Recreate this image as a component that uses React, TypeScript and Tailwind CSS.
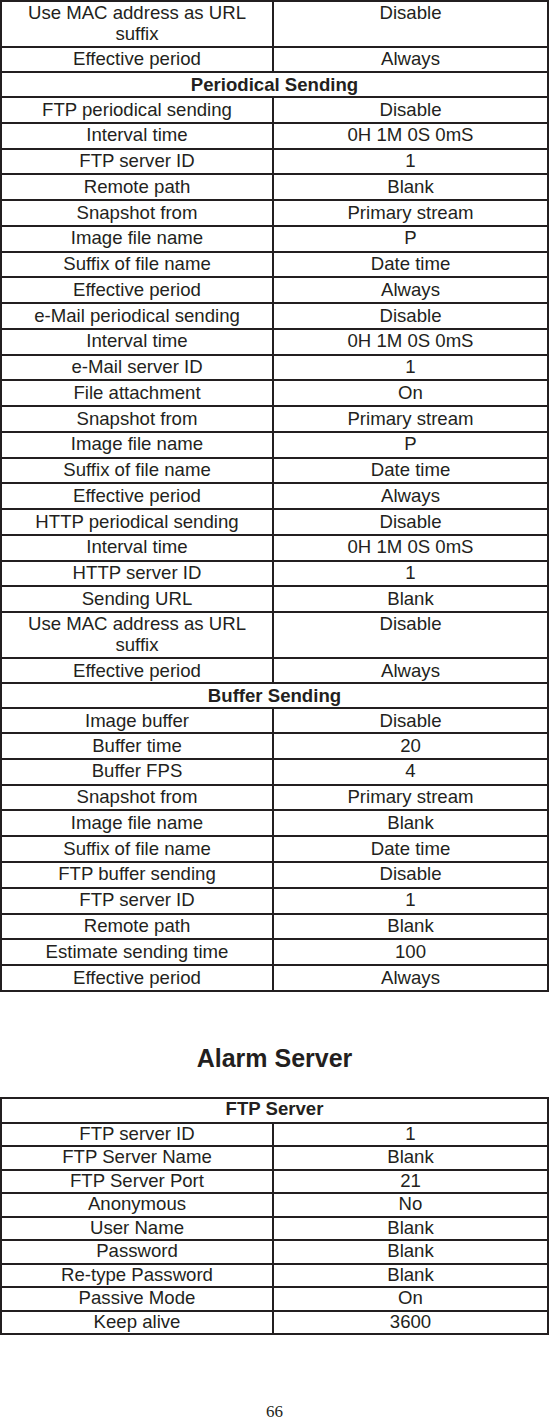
const ink = "#231f20";

type Row =
  | { kind: "pair"; label: string; value: string; h: string; double?: boolean }
  | { kind: "head"; title: string; h: string };

const pair = (label: string, value: string, h = "h-[25.75px]"): Row => ({ kind: "pair", label, value, h });
const dbl = (label: string, value: string, h: string): Row => ({ kind: "pair", label, value, h, double: true });
const head = (title: string, h = "h-[25px]"): Row => ({ kind: "head", title, h });

const sendingRows: Row[] = [
  dbl("Use MAC address as URL suffix", "Disable", "h-[45.5px]"),
  pair("Effective period", "Always", "h-[25.5px]"),
  head("Periodical Sending"),
  pair("FTP periodical sending", "Disable"),
  pair("Interval time", "0H 1M 0S 0mS"),
  pair("FTP server ID", "1"),
  pair("Remote path", "Blank"),
  pair("Snapshot from", "Primary stream"),
  pair("Image file name", "P"),
  pair("Suffix of file name", "Date time"),
  pair("Effective period", "Always"),
  pair("e-Mail periodical sending", "Disable"),
  pair("Interval time", "0H 1M 0S 0mS"),
  pair("e-Mail server ID", "1"),
  pair("File attachment", "On"),
  pair("Snapshot from", "Primary stream"),
  pair("Image file name", "P"),
  pair("Suffix of file name", "Date time"),
  pair("Effective period", "Always"),
  pair("HTTP periodical sending", "Disable"),
  pair("Interval time", "0H 1M 0S 0mS"),
  pair("HTTP server ID", "1"),
  pair("Sending URL", "Blank"),
  dbl("Use MAC address as URL suffix", "Disable", "h-[46px]"),
  pair("Effective period", "Always", "h-[25px]"),
  head("Buffer Sending"),
  pair("Image buffer", "Disable", "h-[25px]"),
  pair("Buffer time", "20", "h-[25.8px]"),
  pair("Buffer FPS", "4", "h-[25.8px]"),
  pair("Snapshot from", "Primary stream", "h-[25.8px]"),
  pair("Image file name", "Blank", "h-[25.8px]"),
  pair("Suffix of file name", "Date time", "h-[25.8px]"),
  pair("FTP buffer sending", "Disable", "h-[25.8px]"),
  pair("FTP server ID", "1", "h-[25.8px]"),
  pair("Remote path", "Blank", "h-[25.8px]"),
  pair("Estimate sending time", "100", "h-[25.8px]"),
  pair("Effective period", "Always", "h-[25.8px]"),
];

const alarmRows: Row[] = [
  head("FTP Server", "h-[25px]"),
  pair("FTP server ID", "1", "h-[23.5px]"),
  pair("FTP Server Name", "Blank", "h-[23.5px]"),
  pair("FTP Server Port", "21", "h-[23.5px]"),
  pair("Anonymous", "No", "h-[23.5px]"),
  pair("User Name", "Blank", "h-[23.5px]"),
  pair("Password", "Blank", "h-[23.5px]"),
  pair("Re-type Password", "Blank", "h-[23.5px]"),
  pair("Passive Mode", "On", "h-[23.5px]"),
  pair("Keep alive", "3600", "h-[23.5px]"),
];

function SettingsTable({ rows, cell }: { rows: Row[]; cell: string }) {
  return (
    <div className="border-x-2 border-b-2 border-[#231f20]">
      {rows.map((row, i) =>
        row.kind === "head" ? (
          <div key={i} className={`${row.h} border-t-2 border-[#231f20] text-center font-bold ${cell}`}>
            {row.title}
          </div>
        ) : (
          <div key={i} className={`${row.h} grid grid-cols-[272px_1fr] border-t-2 border-[#231f20] text-center`}>
            <div className={`border-r-2 border-[#231f20] px-[6px] ${row.double ? "leading-[21px]" : cell}`}>
              {row.label}
            </div>
            <div className={row.double ? "leading-[21px]" : cell}>{row.value}</div>
          </div>
        )
      )}
    </div>
  );
}

export default function App() {
  return (
    <div
      className="w-[549px] h-[1420px] overflow-hidden bg-white text-[#231f20] font-['Liberation_Sans',Arial,sans-serif] text-[18.6px]"
      style={{ color: ink }}
    >
      <SettingsTable rows={sendingRows} cell="leading-[20px] pt-[1.5px]" />

      <h2 className="mt-[52px] mb-[24px] text-center text-[25px] font-bold leading-[29px]">Alarm Server</h2>

      <SettingsTable rows={alarmRows} cell="leading-[18px] pt-[1px]" />

      <div className="mt-[70px] text-center font-['Liberation_Serif','Times_New_Roman',serif] text-[17px] leading-[14px]">
        66
      </div>
    </div>
  );
}
